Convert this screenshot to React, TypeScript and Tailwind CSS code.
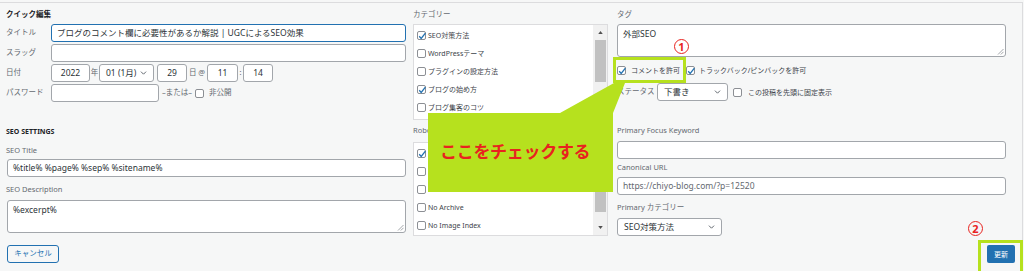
import React from 'react'

function Label({ children, w = '' }: { children: React.ReactNode; w?: string }) {
  return <span className={`shrink-0 text-[7.5px] leading-none text-[#646970] ${w}`}>{children}</span>
}

function Field({ value = '', className = '', center = false, focus = false, muted = false }: { value?: string; className?: string; center?: boolean; focus?: boolean; muted?: boolean }) {
  return (
    <div
      className={`flex h-[18px] shrink-0 items-center overflow-hidden whitespace-nowrap rounded-[3px] border bg-white px-[5px] text-[8.5px] leading-none ${focus ? 'border-[#2271b1]' : 'border-[#a2a6ab]'} ${center ? 'justify-center' : ''} ${muted ? 'text-[#646970]' : 'text-[#2c3338]'} ${className}`}
    >
      {value}
    </div>
  )
}

function Chevron() {
  return (
    <svg viewBox="0 0 8 5" className="h-[4px] w-[7px] shrink-0">
      <path d="M0.8 0.8 L4 4 L7.2 0.8" fill="none" stroke="#50575e" strokeWidth="1.1" />
    </svg>
  )
}

function Select({ value, className = '' }: { value: string; className?: string }) {
  return (
    <div className={`flex h-[18px] shrink-0 items-center justify-between rounded-[3px] border border-[#a2a6ab] bg-white pl-[6px] pr-[6px] text-[8.5px] leading-none text-[#2c3338] ${className}`}>
      <span>{value}</span>
      <Chevron />
    </div>
  )
}

function Check({ on = false }: { on?: boolean }) {
  return (
    <span className="relative inline-block h-[9px] w-[9px] shrink-0 rounded-[2px] border border-[#8c8f94] bg-white">
      {on && (
        <svg viewBox="0 0 10 10" className="absolute -left-[1px] -top-[1px] h-[10px] w-[10px]">
          <path d="M2.2 5.2 L4.2 7.4 L8.4 2.2" fill="none" stroke="#2271b1" strokeWidth="1.3" />
        </svg>
      )}
    </span>
  )
}

function Grip() {
  return (
    <svg viewBox="0 0 7 7" className="absolute bottom-[1px] right-[1px] h-[7px] w-[7px]">
      <path d="M6.5 1 L1 6.5 M6.5 3.8 L3.8 6.5" stroke="#8c8f94" strokeWidth="0.8" />
    </svg>
  )
}

function Area({ value, className = '' }: { value: string; className?: string }) {
  return (
    <div className={`relative shrink-0 rounded-[3px] border border-[#a2a6ab] bg-white px-[5px] pt-[4px] text-[8.5px] leading-[10px] text-[#2c3338] ${className}`}>
      {value}
      <Grip />
    </div>
  )
}

function Arrow({ up = true }: { up?: boolean }) {
  return (
    <div className="flex h-[15px] items-center justify-center">
      <svg viewBox="0 0 6 4" className="h-[3px] w-[5px]">
        <path d={up ? 'M0 4 L3 0 L6 4 Z' : 'M0 0 L3 4 L6 0 Z'} fill="#505050" />
      </svg>
    </div>
  )
}

function CheckList({ items, thumbTop, thumbH, h }: { items: { label: string; on?: boolean }[]; thumbTop: string; thumbH: string; h: string }) {
  return (
    <div className={`flex border border-[#dcdcde] bg-white ${h}`}>
      <div className="flex flex-1 flex-col pl-[3px] pt-[1px]">
        {items.map((it, i) => (
          <div key={i} className="flex h-[18px] items-center gap-[2px]">
            <Check on={it.on} />
            <span className="text-[7px] leading-none text-[#3c434a]">{it.label}</span>
          </div>
        ))}
      </div>
      <div className="flex w-[14px] flex-col bg-[#f1f1f1]">
        <Arrow />
        <div className="flex flex-1 flex-col items-center">
          <div className={`w-[11px] bg-[#c1c1c1] ${thumbTop} ${thumbH}`} />
        </div>
        <Arrow up={false} />
      </div>
    </div>
  )
}

export default function App() {
  return (
    <div className="relative h-[271px] w-[1024px] overflow-hidden bg-[#f6f7f7] pt-[2px] font-['Noto_Sans','Noto_Sans_CJK_JP',sans-serif]">
      <div className="h-[269px] w-[1023px] border-r border-t border-[#dcdcde]">
        {/* top row */}
        <div className="flex h-[117px] pl-[6px]">
          {/* quick edit */}
          <div className="flex w-[400px] flex-col">
            <div className="flex h-[21px] items-center pt-[3px] text-[7.5px] font-bold leading-none text-[#1d2327]">クイック編集</div>
            <div className="flex flex-col gap-[2px]">
              <div className="flex h-[18px] items-center">
                <Label w="w-[45px]">タイトル</Label>
                <Field focus className="w-[355px]" value="ブログのコメント欄に必要性があるか解説 | UGCによるSEO効果" />
              </div>
              <div className="flex h-[18px] items-center">
                <Label w="w-[45px]">スラッグ</Label>
                <Field className="w-[355px]" />
              </div>
              <div className="flex h-[18px] items-center text-[7.5px] leading-none text-[#646970]">
                <Label w="w-[45px]">日付</Label>
                <Field center className="w-[39px]" value="2022" />
                <span className="w-[9px] text-center">年</span>
                <Select className="w-[55px]" value="01 (1月)" />
                <span className="w-[3px]" />
                <Field center className="w-[30px]" value="29" />
                <span className="w-[20px] text-center">日 @</span>
                <Field center className="w-[31px]" value="11" />
                <span className="w-[5px] text-center">:</span>
                <Field center className="w-[30px]" value="14" />
              </div>
              <div className="flex h-[18px] items-center text-[7.5px] leading-none text-[#646970]">
                <Label w="w-[45px]">パスワード</Label>
                <Field className="w-[108px]" />
                <span className="ml-[3px]">–または–</span>
                <span className="ml-[3px] flex items-center">
                  <Check />
                </span>
                <span className="ml-[5px]">非公開</span>
              </div>
            </div>
          </div>

          {/* categories */}
          <div className="ml-[7px] flex w-[195px] flex-col">
            <div className="flex h-[21px] items-center pt-[3px]">
              <Label>カテゴリー</Label>
            </div>
            <CheckList
              h="h-[96px]"
              thumbTop="mt-0"
              thumbH="h-[42px]"
              items={[
                { label: 'SEO対策方法', on: true },
                { label: 'WordPressテーマ' },
                { label: 'プラグインの設定方法' },
                { label: 'ブログの始め方', on: true },
                { label: 'ブログ集客のコツ' },
              ]}
            />
          </div>

          {/* tags */}
          <div className="ml-[9px] flex w-[389px] flex-col">
            <div className="flex h-[21px] items-center pt-[3px]">
              <Label>タグ</Label>
            </div>
            <Area className="h-[33px]" value="外部SEO" />
            <div className="flex h-[26px] items-center text-[7px] leading-none text-[#3c434a]">
              <Check on />
              <span className="ml-[5px]">コメントを許可</span>
              <span className="ml-[6px] flex items-center">
                <Check on />
              </span>
              <span className="ml-[4px]">トラックバック/ピンバックを許可</span>
            </div>
            <div className="flex h-[18px] items-center text-[7px] leading-none text-[#3c434a]">
              <Label w="w-[40px]">ステータス</Label>
              <Select className="w-[71px]" value="下書き" />
              <span className="ml-[5px] flex items-center">
                <Check />
              </span>
              <span className="ml-[6px]">この投稿を先頭に固定表示</span>
            </div>
          </div>
        </div>

        {/* seo row */}
        <div className="flex h-[116px] pl-[6px]">
          <div className="flex w-[400px] flex-col">
            <div className="flex h-[22px] items-center text-[7px] font-bold leading-none text-[#1d2327]">SEO SETTINGS</div>
            <div className="flex h-[17px] items-center">
              <Label>SEO Title</Label>
            </div>
            <Field className="ml-[1px] w-[399px]" value="%title% %page% %sep% %sitename%" />
            <div className="flex h-[23px] items-center pt-[3px]">
              <Label>SEO Description</Label>
            </div>
            <Area className="ml-[1px] h-[33px] w-[399px]" value="%excerpt%" />
          </div>

          <div className="ml-[7px] flex w-[195px] flex-col">
            <div className="flex h-[22px] items-center">
              <Label>Robo</Label>
            </div>
            <CheckList
              h="h-[94px]"
              thumbTop="mt-[7px]"
              thumbH="h-[47px]"
              items={[
                { label: '', on: true },
                { label: '' },
                { label: '' },
                { label: 'No Archive' },
                { label: 'No Image Index' },
              ]}
            />
          </div>

          <div className="ml-[9px] flex w-[389px] flex-col">
            <div className="flex h-[21px] items-center">
              <Label>Primary Focus Keyword</Label>
            </div>
            <Field className="h-[17px] w-[389px]" />
            <div className="flex h-[19px] items-center">
              <Label>Canonical URL</Label>
            </div>
            <Field muted className="w-[389px]" value="https://chiyo-blog.com/?p=12520" />
            <div className="flex h-[23px] items-center pt-[3px]">
              <Label>Primary カテゴリー</Label>
            </div>
            <Select className="w-[105px]" value="SEO対策方法" />
          </div>
        </div>

        {/* actions */}
        <div className="flex items-start justify-between pl-[7px] pr-[7px] pt-[9px]">
          <button className="flex h-[18px] w-[52px] items-center justify-center rounded-[3px] border border-[#2271b1] bg-[#f6f7f7] text-[7.5px] leading-none text-[#2271b1]">
            キャンセル
          </button>
          <button className="flex h-[18px] w-[28px] items-center justify-center rounded-[2px] bg-[#2271b1] text-[7px] leading-none text-white">
            更新
          </button>
        </div>
      </div>

      {/* annotations */}
      <div className="absolute left-[613px] top-[57px] h-[26px] w-[73px] border-[3px] border-[#b6e11e]" />
      <div className="absolute left-[978px] top-[240px] h-[34px] w-[45px] border-[3px] border-[#b6e11e]" />

      <svg className="absolute left-[428px] top-[83px] h-[109px] w-[197px]" viewBox="0 0 197 109">
        <polygon points="0,30 132,30 186,0 197,0 185,30 185,109 0,109" fill="#b6e11e" />
      </svg>
      <div className="absolute left-[440px] top-[143px] text-[17px] font-bold leading-none tracking-[-0.3px] text-[#e8231f]">ここをチェックする</div>

      <div className="absolute left-[674px] top-[39px] flex h-[15px] w-[15px] items-center justify-center rounded-full border-[1.5px] border-[#e8231f] text-[11px] font-bold leading-none text-[#e8231f]">
        1
      </div>
      <div className="absolute left-[968px] top-[221px] flex h-[15px] w-[15px] items-center justify-center rounded-full border-[1.5px] border-[#e8231f] text-[11px] font-bold leading-none text-[#e8231f]">
        2
      </div>
    </div>
  )
}
